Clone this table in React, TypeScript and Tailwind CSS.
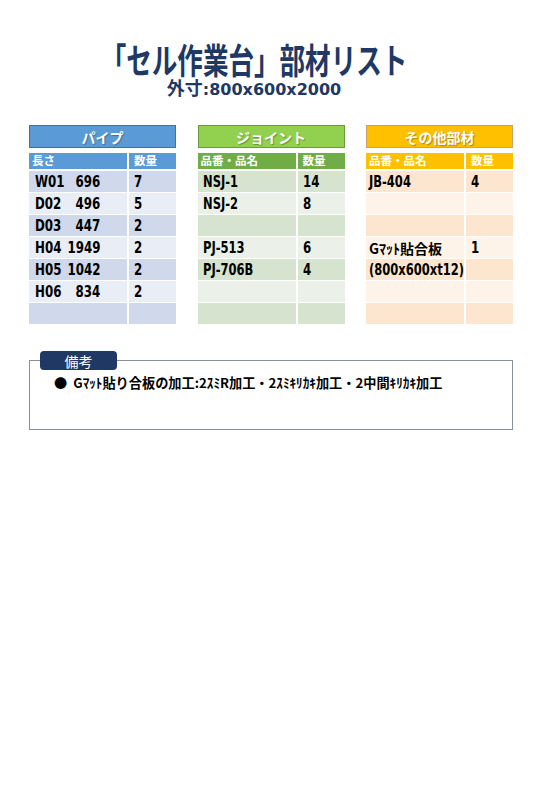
import React from "react";

type Row = { name: string; len?: string; qty: string; jp?: boolean };

type TableProps = {
  title: string;
  boxClass: string;
  headClass: string;
  bandA: string;
  bandB: string;
  colA: string;
  padClass: string;
  rows: Row[];
  pipe?: boolean;
};

const cond = "font-['DejaVu_Sans','Noto_Sans_CJK_JP',sans-serif] font-bold";
const jp = "font-['Noto_Sans_CJK_JP',sans-serif] font-bold";

const PartTable = ({ title, boxClass, headClass, bandA, bandB, colA, padClass, rows, pipe }: TableProps) => {
  return (
    <div className="w-[147px]">
      {/* Title box */}
      <div
        className={`h-[23px] border flex items-center justify-center text-white text-[14px] leading-none [text-shadow:1px_1px_1px_rgba(0,0,0,0.3)] ${jp} ${boxClass}`}
      >
        {title}
      </div>

      {/* Column header */}
      <div className={`mt-[5px] h-[16px] flex gap-[2px] text-white text-[11.5px] leading-none ${jp}`}>
        <div className={`w-[98px] shrink-0 flex items-center pl-[3px] ${headClass}`}>{colA}</div>
        <div className={`flex-1 flex items-center pl-[5px] ${headClass}`}>数量</div>
      </div>

      {/* Rows */}
      <div className="mt-[2px] flex flex-col gap-[1px]">
        {rows.map((r, i) => {
          const band = i % 2 === 0 ? bandA : bandB;
          return (
            <div key={i} className="h-[21px] flex gap-[2px] text-black">
              <div className={`w-[98px] shrink-0 overflow-visible flex items-center ${padClass} ${band}`}>
                {r.jp ? (
                  <span className={`whitespace-nowrap text-[14px] leading-none ${jp}`}>{r.name}</span>
                ) : pipe ? (
                  <span className={`inline-block origin-left scale-x-[0.74] whitespace-nowrap text-[16px] leading-none ${cond}`}>
                    <span className="inline-block w-[44px]">{r.name}</span>
                    <span className="inline-block w-[44px] text-right">{r.len}</span>
                  </span>
                ) : (
                  <span className={`inline-block origin-left scale-x-[0.72] whitespace-nowrap text-[16px] leading-none ${cond}`}>
                    {r.name}
                  </span>
                )}
              </div>
              <div className={`flex-1 flex items-center pl-[5px] ${band}`}>
                <span className={`inline-block origin-left scale-x-[0.74] text-[16px] leading-none ${cond}`}>{r.qty}</span>
              </div>
            </div>
          );
        })}
      </div>
    </div>
  );
};

const pipes: Row[] = [
  { name: "W01", len: "696", qty: "7" },
  { name: "D02", len: "496", qty: "5" },
  { name: "D03", len: "447", qty: "2" },
  { name: "H04", len: "1949", qty: "2" },
  { name: "H05", len: "1042", qty: "2" },
  { name: "H06", len: "834", qty: "2" },
  { name: "", len: "", qty: "" },
];

const joints: Row[] = [
  { name: "NSJ-1", qty: "14" },
  { name: "NSJ-2", qty: "8" },
  { name: "", qty: "" },
  { name: "PJ-513", qty: "6" },
  { name: "PJ-706B", qty: "4" },
  { name: "", qty: "" },
  { name: "", qty: "" },
];

const others: Row[] = [
  { name: "JB-404", qty: "4" },
  { name: "", qty: "" },
  { name: "", qty: "" },
  { name: "Gﾏｯﾄ貼合板", qty: "1", jp: true },
  { name: "(800x600xt12)", qty: "" },
  { name: "", qty: "" },
  { name: "", qty: "" },
];

const App = () => {
  return (
    <div className="w-[540px] min-h-[812px] bg-white pt-[41px]">
      {/* Heading */}
      <div className="w-[508px] text-center text-[#203864]">
        <div className={`h-[36px] leading-[36px] text-[35px] ${jp} font-black`}>
          <span className="inline-block scale-x-[0.73] whitespace-nowrap">「セル作業台」部材リスト</span>
        </div>
        <div className="h-[20px] leading-[20px] whitespace-nowrap">
          <span className={`text-[18px] ${jp}`}>外寸</span>
          <span className={`text-[16px] ${cond}`}>:800x600x2000</span>
        </div>
      </div>

      {/* Tables */}
      <div className="mt-[28px] ml-[29px] w-[484px] flex justify-between">
        <PartTable
          title="パイプ"
          boxClass="bg-[#5b9bd5] border-[#41719c]"
          headClass="bg-[#5b9bd5]"
          bandA="bg-[#cfd9eb]"
          bandB="bg-[#e9edf5]"
          colA="長さ"
          padClass="pl-[6px]"
          rows={pipes}
          pipe
        />
        <PartTable
          title="ジョイント"
          boxClass="bg-[#92d050] border-[#6e9a3e]"
          headClass="bg-[#70ad47]"
          bandA="bg-[#d5e3cf]"
          bandB="bg-[#ebf1e9]"
          colA="品番・品名"
          padClass="pl-[5px]"
          rows={joints}
        />
        <PartTable
          title="その他部材"
          boxClass="bg-[#ffc000] border-[#c9a06a]"
          headClass="bg-[#ffc000]"
          bandA="bg-[#fde6cf]"
          bandB="bg-[#fef3e8]"
          colA="品番・品名"
          padClass="pl-[3px]"
          rows={others}
        />
      </div>

      {/* Remarks */}
      <div className="relative mt-[36px] ml-[29px] w-[484px] h-[70px] border border-[#8a9099]">
        <div
          className={`absolute left-[10px] top-[-10px] w-[77px] h-[19px] rounded-[4px] bg-[#203864] text-white text-[14px] leading-none flex items-center justify-center font-['Noto_Sans_CJK_JP',sans-serif]`}
        >
          備考
        </div>
        <div className={`pl-[24px] pt-[12px] flex items-center gap-[6px] text-black text-[13.2px] leading-[20px] whitespace-nowrap ${jp}`}>
          <span>●</span>
          <span>Gﾏｯﾄ貼り合板の加工:2ｽﾐR加工・2ｽﾐｷﾘｶｷ加工・2中間ｷﾘｶｷ加工</span>
        </div>
      </div>
    </div>
  );
};

export default App;
